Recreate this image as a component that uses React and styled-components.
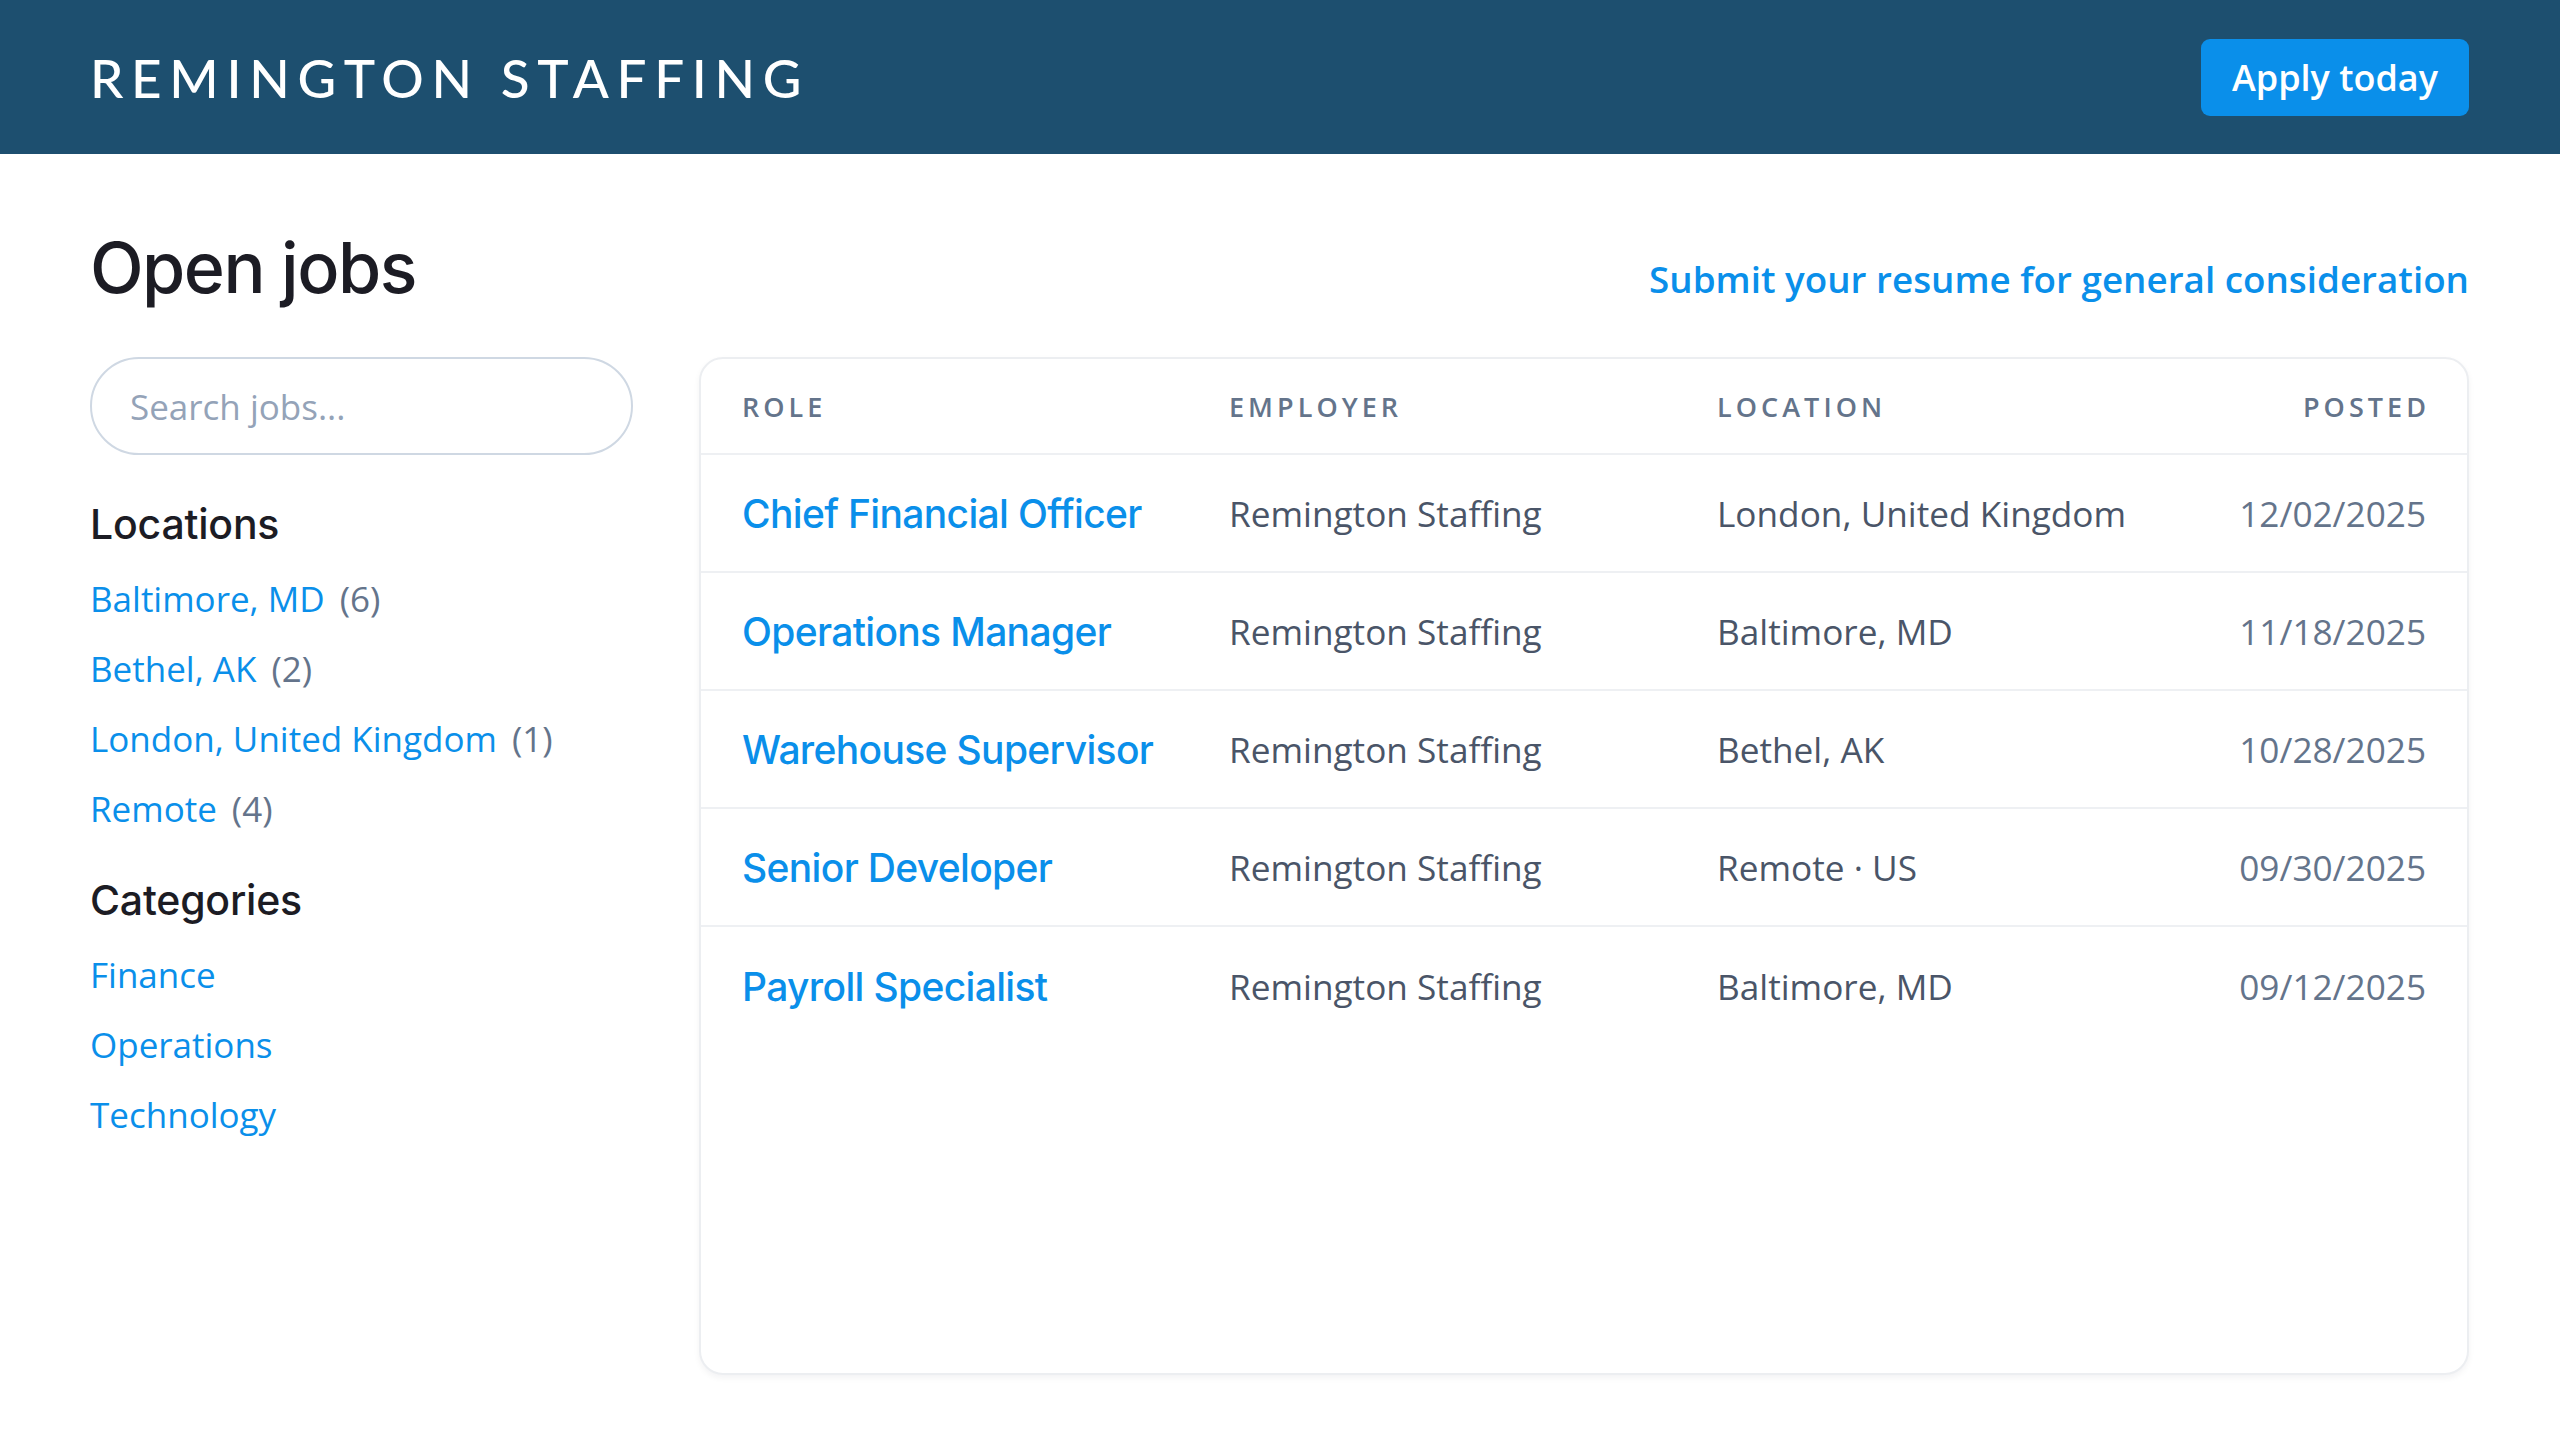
import React from 'react';
import styled, { createGlobalStyle } from 'styled-components';

const GlobalStyle = createGlobalStyle`
  html, body {
    margin: 0;
    padding: 0;
    background: #ffffff;
    font-family: 'Open Sans', 'Noto Sans', sans-serif;
    color: #1f2430;
  }
  * {
    box-sizing: border-box;
  }
`;

const Header = styled.header`
  height: 154px;
  background-color: #1d4f6f;
  display: flex;
  align-items: center;
  justify-content: space-between;
  padding: 0 91px 0 90px;
`;

const Logo = styled.div`
  font-family: 'Lato', sans-serif;
  font-weight: 500;
  font-size: 53px;
  letter-spacing: 0.145em;
  color: #ffffff;
  text-transform: uppercase;
`;

const ApplyButton = styled.button`
  font-family: 'Open Sans', sans-serif;
  font-weight: 600;
  font-size: 36px;
  color: #ffffff;
  background-color: #0a8fea;
  border: none;
  border-radius: 9px;
  height: 77px;
  padding: 0 31px;
  cursor: pointer;
`;

const Main = styled.main`
  padding: 72px 91px 65px 90px;
`;

const TitleRow = styled.div`
  display: flex;
  align-items: baseline;
  justify-content: space-between;
  margin-bottom: 47px;
`;

const Title = styled.h1`
  margin: 0;
  font-family: 'Inter', sans-serif;
  font-weight: 500;
  font-size: 70px;
  line-height: 84px;
  letter-spacing: -0.022em;
  color: #1c1c24;
`;

const ResumeLink = styled.a`
  font-family: 'Open Sans', sans-serif;
  font-weight: 600;
  font-size: 36.8px;
  color: #0a8fea;
  text-decoration: none;
`;

const Body = styled.div`
  display: flex;
  align-items: flex-start;
  gap: 66px;
`;

const Sidebar = styled.aside`
  width: 543px;
  flex-shrink: 0;
  display: flex;
  flex-direction: column;
`;

const Search = styled.input`
  width: 100%;
  height: 98px;
  border: 2px solid #cfd8e3;
  border-radius: 49px;
  padding: 0 38px;
  font-family: 'Open Sans', sans-serif;
  font-size: 35px;
  color: #1f2430;
  outline: none;
  &::placeholder {
    color: #94a3b8;
  }
`;

const SectionTitle = styled.h2`
  margin: ${p => p.$first ? '45px' : '40px'} 0 0;
  font-family: 'Inter', sans-serif;
  font-weight: 500;
  font-size: 41px;
  line-height: 48px;
  letter-spacing: -0.005em;
  color: #1c1c24;
`;

const FilterList = styled.ul`
  list-style: none;
  margin: 24px 0 0;
  padding: 0;
  display: flex;
  flex-direction: column;
  gap: 16px;
`;

const FilterItem = styled.li`
  font-size: 35px;
  line-height: 54px;
  display: flex;
  gap: 15px;
`;

const FilterLink = styled.a`
  color: #0a8fea;
  text-decoration: none;
`;

const Count = styled.span`
  color: #64748b;
`;

const Card = styled.section`
  flex: 1;
  min-height: 1018px;
  border: 2px solid #eceef1;
  border-radius: 24px;
  box-shadow: 0 3px 6px rgba(15, 23, 42, 0.05);
  background: #ffffff;
`;

const Row = styled.div`
  display: grid;
  grid-template-columns: 487px 488px 1fr auto;
  align-items: center;
  height: ${p => p.$head ? '96px' : '118px'};
  padding: 0 41px;
  border-bottom: ${p => p.$last ? 'none' : '2px solid #eef0f3'};
`;

const HeadCell = styled.div`
  font-family: 'Open Sans', sans-serif;
  font-weight: 600;
  font-size: 27px;
  letter-spacing: 0.15em;
  color: #64748b;
  text-transform: uppercase;
  text-align: ${p => p.$right ? 'right' : 'left'};
  margin-right: ${p => p.$right ? '-0.15em' : '0'};
`;

const RoleLink = styled.a`
  font-family: 'Inter', sans-serif;
  font-weight: 500;
  font-size: 39px;
  letter-spacing: -0.017em;
  color: #0a8fea;
  text-decoration: none;
`;

const Cell = styled.div`
  font-size: 35.2px;
  color: ${p => p.$muted ? '#64748b' : '#4a5568'};
  text-align: ${p => p.$right ? 'right' : 'left'};
`;

const locations = [
  { name: 'Baltimore, MD', count: 6 },
  { name: 'Bethel, AK', count: 2 },
  { name: 'London, United Kingdom', count: 1 },
  { name: 'Remote', count: 4 },
];

const categories = ['Finance', 'Operations', 'Technology'];

const jobs = [
  { role: 'Chief Financial Officer', location: 'London, United Kingdom', posted: '12/02/2025' },
  { role: 'Operations Manager', location: 'Baltimore, MD', posted: '11/18/2025' },
  { role: 'Warehouse Supervisor', location: 'Bethel, AK', posted: '10/28/2025' },
  { role: 'Senior Developer', location: 'Remote · US', posted: '09/30/2025' },
  { role: 'Payroll Specialist', location: 'Baltimore, MD', posted: '09/12/2025' },
];

export default function App() {
  return (
    <>
      <GlobalStyle />
      <Header>
        <Logo>Remington Staffing</Logo>
        <ApplyButton type="button">Apply today</ApplyButton>
      </Header>
      <Main>
        <TitleRow>
          <Title>Open jobs</Title>
          <ResumeLink href="#">Submit your resume for general consideration</ResumeLink>
        </TitleRow>
        <Body>
          <Sidebar>
            <Search placeholder="Search jobs..." />
            <SectionTitle $first>Locations</SectionTitle>
            <FilterList>
              {locations.map(loc => (
                <FilterItem key={loc.name}>
                  <FilterLink href="#">{loc.name}</FilterLink>
                  <Count>({loc.count})</Count>
                </FilterItem>
              ))}
            </FilterList>
            <SectionTitle>Categories</SectionTitle>
            <FilterList>
              {categories.map(cat => (
                <FilterItem key={cat}>
                  <FilterLink href="#">{cat}</FilterLink>
                </FilterItem>
              ))}
            </FilterList>
          </Sidebar>
          <Card>
            <Row $head>
              <HeadCell>Role</HeadCell>
              <HeadCell>Employer</HeadCell>
              <HeadCell>Location</HeadCell>
              <HeadCell $right>Posted</HeadCell>
            </Row>
            {jobs.map((job, i) => (
              <Row key={job.role} $last={i === jobs.length - 1}>
                <div>
                  <RoleLink href="#">{job.role}</RoleLink>
                </div>
                <Cell>Remington Staffing</Cell>
                <Cell>{job.location}</Cell>
                <Cell $muted $right>{job.posted}</Cell>
              </Row>
            ))}
          </Card>
        </Body>
      </Main>
    </>
  );
}
